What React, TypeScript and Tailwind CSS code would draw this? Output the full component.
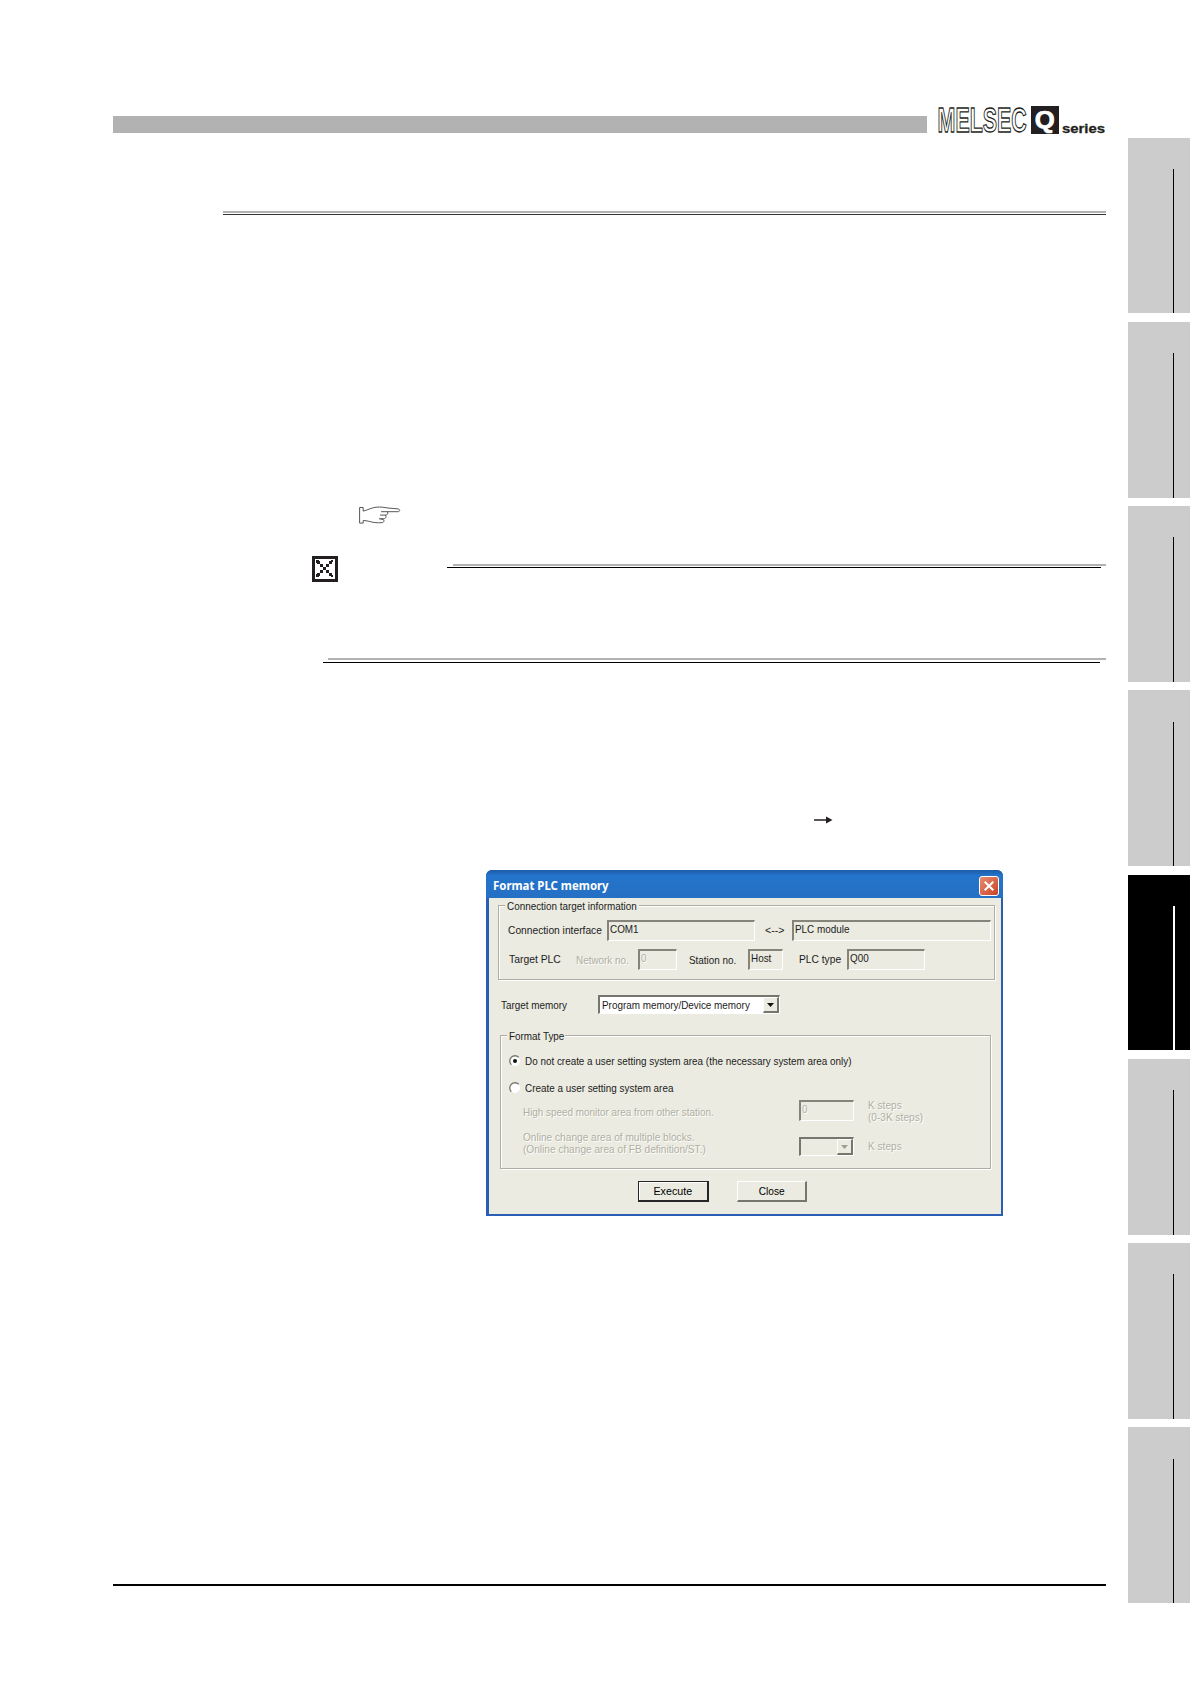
import type { ReactNode } from 'react';
import clsx from 'clsx';

type Tab = { height: string; offset: string; active?: boolean };

const TABS: Tab[] = [
  { height: 'h-[175px] mb-[9px]', offset: 'pt-[31px]' },
  { height: 'h-[176px] mb-[8px]', offset: 'pt-[31px]' },
  { height: 'h-[176px] mb-[8px]', offset: 'pt-[31px]' },
  { height: 'h-[176px] mb-[9px]', offset: 'pt-[32px]' },
  { height: 'h-[175px] mb-[9px]', offset: 'pt-[31px]', active: true },
  { height: 'h-[176px] mb-[8px]', offset: 'pt-[31px]' },
  { height: 'h-[176px] mb-[8px]', offset: 'pt-[31px]' },
  { height: 'h-[176px]', offset: 'pt-[32px]' },
];

function ChapterTabs() {
  return (
    <nav className="ml-[22px] flex w-[62px] flex-col pt-[138px]">
      {TABS.map((tab, i) => (
        <div
          key={i}
          className={clsx('shrink-0 pl-[45px]', tab.height, tab.offset, tab.active ? 'bg-black' : 'bg-[#cccccc]')}
        >
          <div className={clsx('h-full', tab.active ? 'w-[2px] bg-white' : 'w-px bg-black')} />
        </div>
      ))}
    </nav>
  );
}

function Logo() {
  return (
    <svg
      className="ml-[10px] shrink-0 overflow-visible font-['Liberation_Sans',sans-serif] font-bold"
      width="170"
      height="30"
      viewBox="0 0 170 30"
    >
      <text
        transform="translate(.6 26) scale(.62 1)"
        fontSize="34.500"
        fill="#fff"
        stroke="#231f20"
        strokeWidth="1.050"
        vectorEffect="non-scaling-stroke"
      >
        MELSEC
      </text>
      <rect x="94" y="0" width="28" height="28" fill="#231f20" />
      <text transform="translate(97.700 21.800) scale(1.050 1)" fontSize="24.500" fill="#fff" stroke="#fff" strokeWidth=".7">
        Q
      </text>
      <text transform="translate(125 27) scale(1.190 1)" fontSize="12.500" fill="#231f20" stroke="#231f20" strokeWidth=".3">
        series
      </text>
    </svg>
  );
}

function PointingHand() {
  return (
    <svg className="ml-[246px] mt-[291px] shrink-0" width="42" height="18" viewBox="0 0 42 18" fill="none" stroke="#444" strokeWidth=".9">
      <path d="M.6 1.500h3.600v3.600C9 4 12 1.800 17 1.200c5-.5 8 .2 12 .8l10 .9c2.400.4 2.200 2.800-.2 2.800H22" />
      <path d="M.6 1.500v15.600h3.600v-2.600c4 0 7 1.400 11 2 3 .4 5.500.3 8 .1 2-.4 2.400-2.400.6-3.200M28.500 5.700c1 2.500-.5 3.300-2.500 3.400h-5M26.500 9.200c1.500 2.500-.5 3.600-2.500 3.600h-4M21.500 13l3 .2" />
    </svg>
  );
}

// 26px box with a pixelled cross, drawn on a 3px raster
function CrossIcon() {
  return (
    <svg className="shrink-0" width="26" height="26" viewBox="0 0 26 26" fill="#231f20" shapeRendering="crispEdges">
      <path fillRule="evenodd" d="M0 0h26v26H0zM3 3v20h20V3z" />
      <path d="M4 4h3l-3 3zM21 4h-3l3 3zM4 21h3l-3-3zM21 21h-3l3-3z" />
      {[5, 8, 11, 14, 17].map((c) => (
        <g key={c}>
          <rect x={c} y={c} width="3" height="3" />
          <rect x={c} y={22 - c} width="3" height="3" />
        </g>
      ))}
    </svg>
  );
}

type LabelProps = { children?: ReactNode; className?: string; scale?: string; disabled?: boolean };

function Label({ children, className, scale = 'scale-x-[.86]', disabled }: LabelProps) {
  return (
    <div
      className={clsx(
        'shrink-0 whitespace-nowrap',
        disabled ? 'text-[#b0afa2] [text-shadow:1px_1px_0_#fff]' : 'text-[#1c1c1c]',
        className,
      )}
    >
      <span className={clsx('inline-block origin-left', scale)}>{children}</span>
    </div>
  );
}

function Field({ children, className, disabled }: LabelProps) {
  return (
    <div
      className={clsx(
        'h-[21px] shrink-0 border-t-2 border-l-2 border-r border-b border-t-[#85847a] border-l-[#85847a] border-r-white border-b-white pl-px leading-[14px]',
        className,
      )}
    >
      <Label disabled={disabled}>{children}</Label>
    </div>
  );
}

function Combo({ children, className, disabled }: LabelProps) {
  return (
    <div
      className={clsx(
        'flex h-[19px] shrink-0 border-t-2 border-l-2 border-r border-b border-t-[#77766e] border-l-[#77766e] border-r-white border-b-white',
        !disabled && 'bg-white',
        className,
      )}
    >
      <div className="w-0 flex-1 pl-[2px] leading-[17px]">
        <Label>{children}</Label>
      </div>
      <div className="flex w-[16px] shrink-0 items-center justify-center border-t border-l border-r-2 border-b-2 border-t-white border-l-white border-r-[#77766e] border-b-[#77766e] bg-[#ebebe1]">
        <svg width="7" height="4" viewBox="0 0 7 4" fill={disabled ? '#a09f94' : '#111'}>
          <path d="M0 0h7L3.500 4z" />
        </svg>
      </div>
    </div>
  );
}

function Group({ title, titleWidth, className, children }: { title: string; titleWidth: string; className?: string; children: ReactNode }) {
  return (
    <div className={clsx('relative shrink-0 border border-[#adada2] shadow-[1px_1px_0_#fff,inset_1px_1px_0_#fff]', className)}>
      <div className={clsx('absolute -top-[6px] left-[6px] bg-[#ebebe1] pl-[2px] leading-[13px]', titleWidth)}>
        <Label>{title}</Label>
      </div>
      {children}
    </div>
  );
}

function Radio({ checked, children, className }: { checked?: boolean; children: ReactNode; className?: string }) {
  return (
    <div className={clsx('ml-[8px] flex h-[14px] items-center', className)}>
      <svg width="12" height="12" viewBox="0 0 12 12" className="mr-[4px] shrink-0">
        <circle cx="6" cy="6" r="5" fill="#fff" />
        <path d="M2.300 9.700A5 5 0 0 1 9.700 2.300" fill="none" stroke="#77766e" strokeWidth="1.300" />
        {checked && <circle cx="6" cy="6" r="2" fill="#111" />}
      </svg>
      <Label>{children}</Label>
    </div>
  );
}

function FormatDialog() {
  return (
    <section className="mt-[45px] ml-[373px] flex h-[346px] w-[517px] shrink-0 flex-col rounded-t-[6px] bg-[#2a5db4] font-['Liberation_Sans',sans-serif] text-[11.500px] leading-[14px]">
      <header className="flex h-[28px] shrink-0 items-center justify-between rounded-t-[6px] bg-linear-to-b from-[#1d5ba8] via-[#2374cb] via-20% to-[#2570c4] pr-[4px] pl-[7px]">
        <h1 className="origin-left scale-x-[.95] pt-[3px] font-['Noto_Sans',sans-serif] text-[12px] font-bold whitespace-nowrap text-white">
          Format PLC memory
        </h1>
        <button className="mt-[3px] flex h-[20px] w-[20px] items-center justify-center rounded-[3px] border border-white bg-linear-to-br from-[#e58c72] to-[#c9401f]">
          <svg width="10" height="10" viewBox="0 0 10 10" stroke="#fff" strokeWidth="2">
            <path d="M.7.7l8.600 8.600M9.300.7L.7 9.300" />
          </svg>
        </button>
      </header>

      <div className="mr-[2px] ml-[3px] flex h-[316px] flex-col bg-[#ebebe1]">
        <Group title="Connection target information" titleWidth="w-[134px]" className="mt-[7px] ml-[9px] h-[75px] w-[497px] pt-[13px]">
          <div className="flex h-[22px] items-center pl-[9px]">
            <Label className="w-[99px]" scale="scale-x-[.89]">Connection interface</Label>
            <Field className="w-[148px]">COM1</Field>
            <Label className="ml-[10px] w-[27px]" scale="scale-x-[.92]">&lt;--&gt;</Label>
            <Field className="w-[199px]">PLC module</Field>
          </div>
          <div className="mt-[7px] flex h-[22px] items-center pl-[10px]">
            <Label className="w-[67px]" scale="scale-x-[.9]">Target PLC</Label>
            <Label className="w-[62px] pt-px" disabled>Network no.</Label>
            <Field className="w-[39px]" disabled>0</Field>
            <Label className="ml-[12px] w-[59px] pt-px">Station no.</Label>
            <Field className="w-[35px]">Host</Field>
            <Label className="ml-[16px] w-[48px]" scale="scale-x-[.89]">PLC type</Label>
            <Field className="w-[78px]">Q00</Field>
          </div>
        </Group>

        <div className="mt-[15px] ml-[12px] flex h-[20px] items-start">
          <Label className="w-[97px] pt-[3px]">Target memory</Label>
          <Combo className="w-[182px]">Program memory/Device memory</Combo>
        </div>

        <Group title="Format Type" titleWidth="w-[58px]" className="mt-[20px] ml-[11px] h-[134px] w-[491px] pt-[18px]">
          <Radio checked>Do not create a user setting system area (the necessary system area only)</Radio>
          <Radio className="mt-[13px]">Create a user setting system area</Radio>
          <div className="mt-[5px] ml-[22px] flex h-[21px] items-center">
            <Label className="w-[276px] pt-[2px]" disabled>High speed monitor area from other station.</Label>
            <Field className="w-[55px]" disabled>0</Field>
            <Label className="ml-[14px] leading-[12px]" scale="scale-x-[.88]" disabled>
              K steps
              <br />
              (0-3K steps)
            </Label>
          </div>
          <div className="mt-[10px] ml-[22px] flex h-[25px] items-end">
            <Label className="w-[276px] pb-px leading-[12px]" scale="scale-x-[.88]" disabled>
              Online change area of multiple blocks.
              <br />
              (Online change area of FB definition/ST.)
            </Label>
            <Combo className="w-[55px]" disabled />
            <Label className="ml-[14px] pb-[3px]" scale="scale-x-[.88]" disabled>K steps</Label>
          </div>
        </Group>

        <div className="mt-[12px] ml-[149px] flex h-[21px] gap-[28px]">
          <button className="flex w-[71px] items-center justify-center border border-r-2 border-b-2 border-[#262626] shadow-[inset_1px_1px_0_#fff]">
            <span className="scale-x-[.93]">Execute</span>
          </button>
          <button className="flex w-[70px] items-center justify-center border-t border-l border-r-2 border-b-2 border-t-white border-l-white border-r-[#77766e] border-b-[#77766e]">
            <span className="scale-x-[.88]">Close</span>
          </button>
        </div>
      </div>
    </section>
  );
}

export default function App() {
  return (
    <div className="flex h-[1684px] w-[1190px] overflow-hidden bg-white">
      <main className="flex w-[1106px] shrink-0 flex-col pt-[106px] pl-[113px]">
        <header className="flex h-[28px] shrink-0">
          <div className="mt-[10px] h-[17px] w-[814px] shrink-0 bg-[#b2b2b2]" />
          <Logo />
        </header>

        <div className="mt-[77px] ml-[110px] h-[4px] shrink-0 border-t-2 border-b border-t-[#b2b2b2] border-b-[#333]" />

        <PointingHand />

        <div className="mt-[32px] ml-[199px] flex h-[26px] shrink-0">
          <CrossIcon />
          <div className="mt-[8px] ml-[109px] flex-1">
            <div className="ml-[6px] h-[2px] bg-[#b2b2b2]" />
            <div className="mt-px mr-[5px] h-px bg-black" />
          </div>
        </div>

        <div className="mt-[76px] ml-[210px] h-[5px] shrink-0">
          <div className="ml-[5px] h-[2px] bg-[#b2b2b2]" />
          <div className="mt-[2px] mr-[6px] h-px bg-black" />
        </div>

        <svg className="mt-[152px] ml-[701px] shrink-0" width="19" height="10" viewBox="0 0 19 10">
          <path d="M0 5h14" stroke="#231f20" strokeWidth="1.500" />
          <path d="M12 1.500L18.500 5 12 8.500z" fill="#231f20" />
        </svg>

        <FormatDialog />

        <div className="mt-[368px] h-[2px] shrink-0 bg-black" />
      </main>
      <ChapterTabs />
    </div>
  );
}
